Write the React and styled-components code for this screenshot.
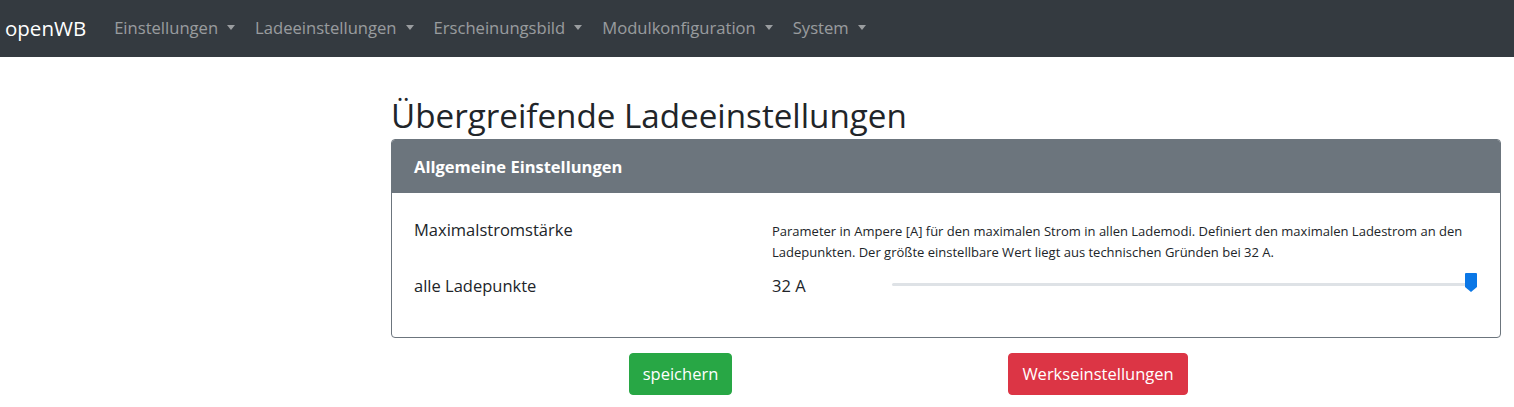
import React from 'react';
import styled, { createGlobalStyle } from 'styled-components';

const GlobalStyle = createGlobalStyle`
  body {
    margin: 0;
    font-family: "Open Sans", "Noto Sans", sans-serif;
    color: #212529;
    background: #fff;
  }
`;

const Navbar = styled.nav`
  display: flex;
  align-items: center;
  height: 57px;
  background: #343a40;
  padding: 0 5px 2px;
  box-sizing: border-box;
`;

const Brand = styled.a`
  font-size: 20.5px;
  color: #fff;
  margin-right: 18px;
  text-decoration: none;
`;

const NavLink = styled.a`
  display: flex;
  align-items: center;
  font-size: 16.6px;
  color: rgba(255, 255, 255, 0.5);
  padding: 0 10px;
  text-decoration: none;

  &::after {
    content: '';
    margin-left: 9px;
    border-top: 5px solid;
    border-left: 4.5px solid transparent;
    border-right: 4.5px solid transparent;
  }
`;

const Main = styled.main`
  padding: 0 13px 0 391px;
`;

const Title = styled.h1`
  font-size: 33.2px;
  font-weight: 400;
  line-height: 1.2;
  margin: 0;
  padding: 39px 0 3px;
`;

const Card = styled.section`
  border: 1px solid #6c757d;
  border-radius: 4px;
  overflow: hidden;
`;

const CardHeader = styled.div`
  background: #6c757d;
  color: #fff;
  font-weight: 700;
  font-size: 16.5px;
  height: 53px;
  display: flex;
  align-items: center;
  padding: 0 22px;
`;

const CardBody = styled.div`
  padding: 25px 22px 39px;
  display: grid;
  grid-template-columns: 358px 1fr;
  row-gap: 10px;
`;

const Label = styled.div`
  font-size: 16.5px;
  line-height: 24px;
`;

const Help = styled.p`
  margin: 3px 0 0;
  font-size: 13px;
  line-height: 21.5px;
`;

const ValueRow = styled.div`
  display: grid;
  grid-template-columns: 120px 1fr;
  align-items: center;
`;

const Value = styled.span`
  font-size: 16.5px;
  line-height: 24px;
`;

const Track = styled.div`
  position: relative;
  height: 3px;
  margin: 0 4px 3px 0;
  background: #dee2e6;
  border-radius: 2px;
`;

const Thumb = styled.svg`
  position: absolute;
  right: -3px;
  top: -10px;
`;

const Actions = styled.div`
  display: grid;
  grid-template-columns: 579px 256px;
  padding-top: 15px;
`;

const ButtonCell = styled.div`
  display: flex;
  justify-content: center;
`;

const Button = styled.button`
  font-family: inherit;
  font-size: 16.5px;
  color: #fff;
  background: ${p => p.bg};
  border: 1px solid ${p => p.bg};
  border-radius: 4px;
  height: 42px;
  padding: 0 13px;
  cursor: pointer;
`;

const menu = ['Einstellungen', 'Ladeeinstellungen', 'Erscheinungsbild', 'Modulkonfiguration', 'System'];

export default function App() {
  return (
    <>
      <GlobalStyle />
      <Navbar>
        <Brand href="#">openWB</Brand>
        {menu.map(item => (
          <NavLink key={item} href="#">
            {item}
          </NavLink>
        ))}
      </Navbar>
      <Main>
        <Title>Übergreifende Ladeeinstellungen</Title>
        <Card>
          <CardHeader>Allgemeine Einstellungen</CardHeader>
          <CardBody>
            <Label>Maximalstromstärke</Label>
            <Help>
              Parameter in Ampere [A] für den maximalen Strom in allen Lademodi. Definiert den maximalen Ladestrom an den
              Ladepunkten. Der größte einstellbare Wert liegt aus technischen Gründen bei 32 A.
            </Help>
            <Label>alle Ladepunkte</Label>
            <ValueRow>
              <Value>32 A</Value>
              <Track>
                <Thumb width="12" height="20" viewBox="0 0 12 20">
                  <path d="M1 0h10a1 1 0 0 1 1 1v13l-6 5l-6-5V1a1 1 0 0 1 1-1z" fill="#0a77e6" />
                </Thumb>
              </Track>
            </ValueRow>
          </CardBody>
        </Card>
        <Actions>
          <ButtonCell>
            <Button bg="#28a745">speichern</Button>
          </ButtonCell>
          <ButtonCell>
            <Button bg="#dc3545">Werkseinstellungen</Button>
          </ButtonCell>
        </Actions>
      </Main>
    </>
  );
}
